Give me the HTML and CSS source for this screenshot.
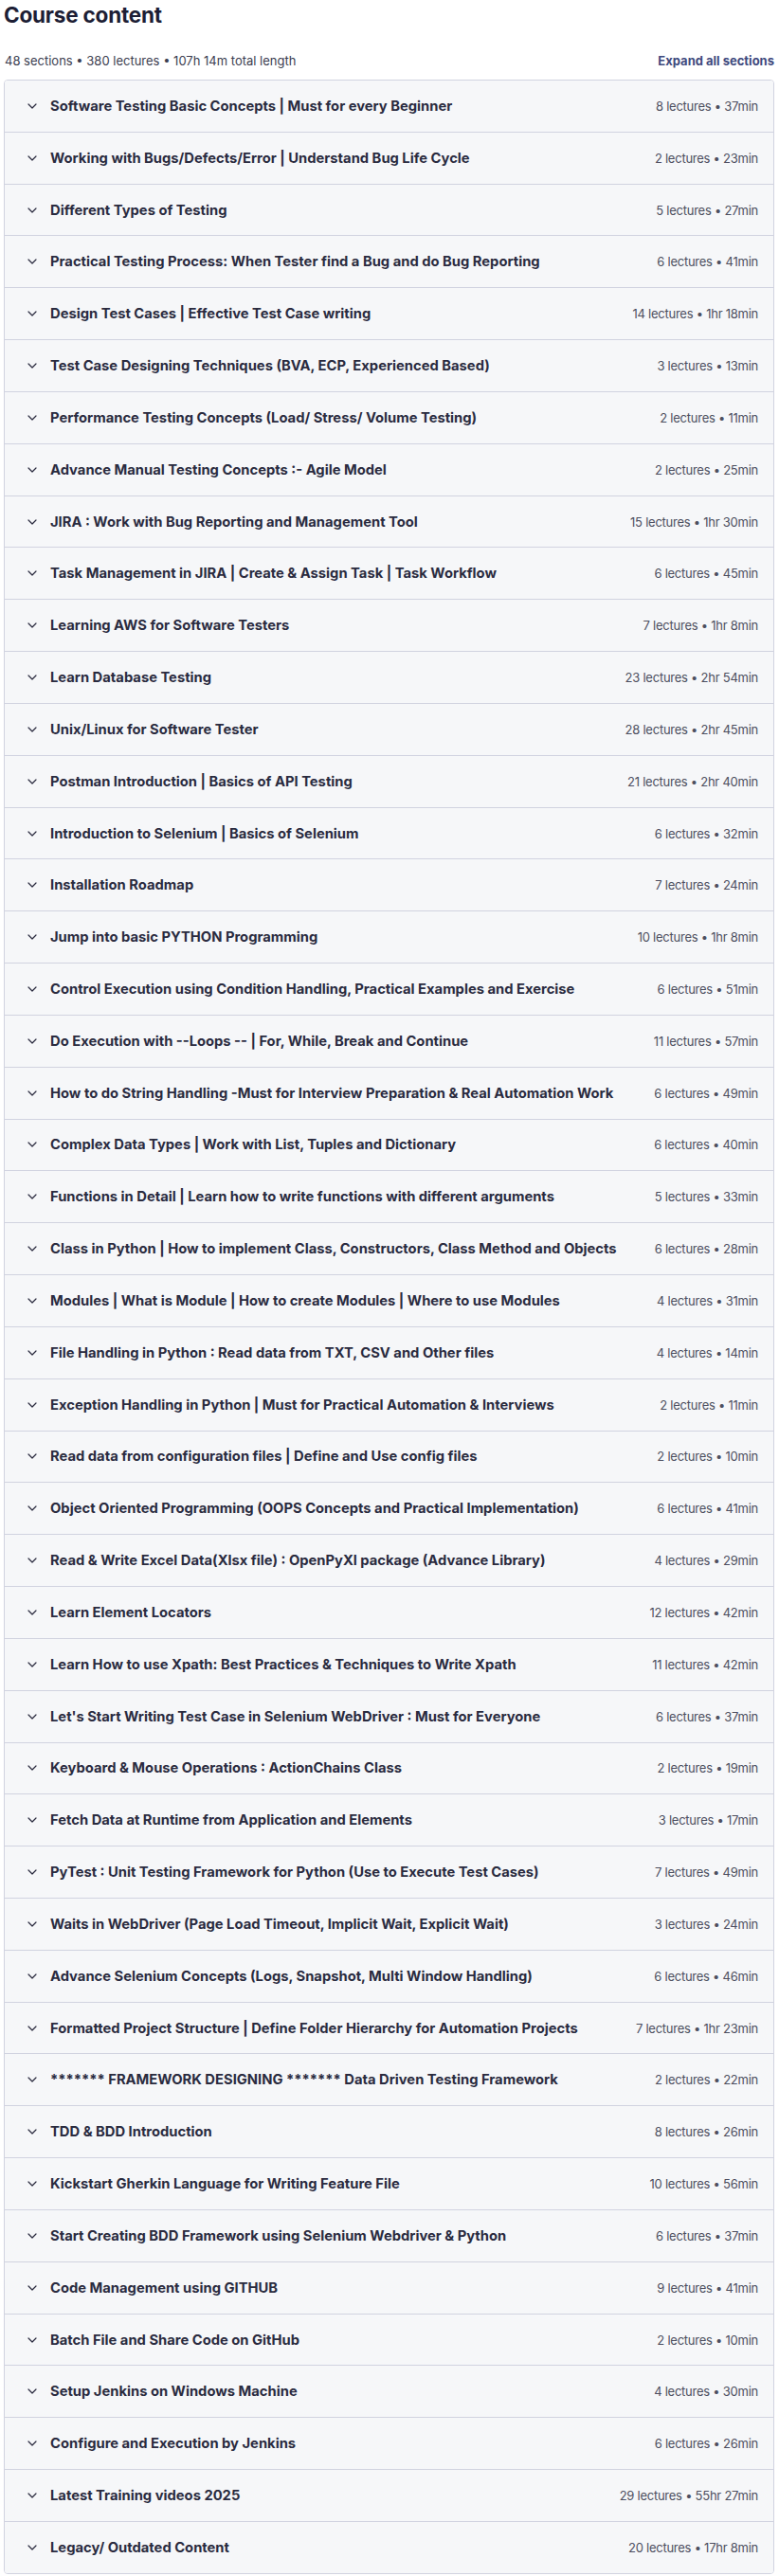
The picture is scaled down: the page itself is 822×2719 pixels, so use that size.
FILE: index.html
```html
<!DOCTYPE html>
<html lang="en">
<head>
<meta charset="utf-8">
<title>Course content</title>
<link rel="stylesheet" href="styles.css">
</head>
<body>
<main class="page">
  <h2 class="heading">Course content</h2>
  <div class="summary">
    <span class="summary-text">48 sections • 380 lectures • 107h 14m total length</span>
    <button class="expand">Expand all sections</button>
  </div>
  <div class="sections">
    <div class="section"><span class="chev"><svg viewBox="0 0 10 6" width="10" height="6"><polyline points="1,1 5,5 9,1"/></svg></span><span class="title">Software Testing Basic Concepts | Must for every Beginner</span><span class="meta">8 lectures • 37min</span></div>
    <div class="section"><span class="chev"><svg viewBox="0 0 10 6" width="10" height="6"><polyline points="1,1 5,5 9,1"/></svg></span><span class="title">Working with Bugs/Defects/Error | Understand Bug Life Cycle</span><span class="meta">2 lectures • 23min</span></div>
    <div class="section"><span class="chev"><svg viewBox="0 0 10 6" width="10" height="6"><polyline points="1,1 5,5 9,1"/></svg></span><span class="title">Different Types of Testing</span><span class="meta">5 lectures • 27min</span></div>
    <div class="section"><span class="chev"><svg viewBox="0 0 10 6" width="10" height="6"><polyline points="1,1 5,5 9,1"/></svg></span><span class="title">Practical Testing Process: When Tester find a Bug and do Bug Reporting</span><span class="meta">6 lectures • 41min</span></div>
    <div class="section"><span class="chev"><svg viewBox="0 0 10 6" width="10" height="6"><polyline points="1,1 5,5 9,1"/></svg></span><span class="title">Design Test Cases | Effective Test Case writing</span><span class="meta">14 lectures • 1hr 18min</span></div>
    <div class="section"><span class="chev"><svg viewBox="0 0 10 6" width="10" height="6"><polyline points="1,1 5,5 9,1"/></svg></span><span class="title">Test Case Designing Techniques (BVA, ECP, Experienced Based)</span><span class="meta">3 lectures • 13min</span></div>
    <div class="section"><span class="chev"><svg viewBox="0 0 10 6" width="10" height="6"><polyline points="1,1 5,5 9,1"/></svg></span><span class="title">Performance Testing Concepts (Load/ Stress/ Volume Testing)</span><span class="meta">2 lectures • 11min</span></div>
    <div class="section"><span class="chev"><svg viewBox="0 0 10 6" width="10" height="6"><polyline points="1,1 5,5 9,1"/></svg></span><span class="title">Advance Manual Testing Concepts :- Agile Model</span><span class="meta">2 lectures • 25min</span></div>
    <div class="section"><span class="chev"><svg viewBox="0 0 10 6" width="10" height="6"><polyline points="1,1 5,5 9,1"/></svg></span><span class="title">JIRA : Work with Bug Reporting and Management Tool</span><span class="meta">15 lectures • 1hr 30min</span></div>
    <div class="section"><span class="chev"><svg viewBox="0 0 10 6" width="10" height="6"><polyline points="1,1 5,5 9,1"/></svg></span><span class="title">Task Management in JIRA | Create &amp; Assign Task | Task Workflow</span><span class="meta">6 lectures • 45min</span></div>
    <div class="section"><span class="chev"><svg viewBox="0 0 10 6" width="10" height="6"><polyline points="1,1 5,5 9,1"/></svg></span><span class="title">Learning AWS for Software Testers</span><span class="meta">7 lectures • 1hr 8min</span></div>
    <div class="section"><span class="chev"><svg viewBox="0 0 10 6" width="10" height="6"><polyline points="1,1 5,5 9,1"/></svg></span><span class="title">Learn Database Testing</span><span class="meta">23 lectures • 2hr 54min</span></div>
    <div class="section"><span class="chev"><svg viewBox="0 0 10 6" width="10" height="6"><polyline points="1,1 5,5 9,1"/></svg></span><span class="title">Unix/Linux for Software Tester</span><span class="meta">28 lectures • 2hr 45min</span></div>
    <div class="section"><span class="chev"><svg viewBox="0 0 10 6" width="10" height="6"><polyline points="1,1 5,5 9,1"/></svg></span><span class="title">Postman Introduction | Basics of API Testing</span><span class="meta">21 lectures • 2hr 40min</span></div>
    <div class="section"><span class="chev"><svg viewBox="0 0 10 6" width="10" height="6"><polyline points="1,1 5,5 9,1"/></svg></span><span class="title">Introduction to Selenium | Basics of Selenium</span><span class="meta">6 lectures • 32min</span></div>
    <div class="section"><span class="chev"><svg viewBox="0 0 10 6" width="10" height="6"><polyline points="1,1 5,5 9,1"/></svg></span><span class="title">Installation Roadmap</span><span class="meta">7 lectures • 24min</span></div>
    <div class="section"><span class="chev"><svg viewBox="0 0 10 6" width="10" height="6"><polyline points="1,1 5,5 9,1"/></svg></span><span class="title">Jump into basic PYTHON Programming</span><span class="meta">10 lectures • 1hr 8min</span></div>
    <div class="section"><span class="chev"><svg viewBox="0 0 10 6" width="10" height="6"><polyline points="1,1 5,5 9,1"/></svg></span><span class="title">Control Execution using Condition Handling, Practical Examples and Exercise</span><span class="meta">6 lectures • 51min</span></div>
    <div class="section"><span class="chev"><svg viewBox="0 0 10 6" width="10" height="6"><polyline points="1,1 5,5 9,1"/></svg></span><span class="title">Do Execution with --Loops -- | For, While, Break and Continue</span><span class="meta">11 lectures • 57min</span></div>
    <div class="section"><span class="chev"><svg viewBox="0 0 10 6" width="10" height="6"><polyline points="1,1 5,5 9,1"/></svg></span><span class="title">How to do String Handling -Must for Interview Preparation &amp; Real Automation Work</span><span class="meta">6 lectures • 49min</span></div>
    <div class="section"><span class="chev"><svg viewBox="0 0 10 6" width="10" height="6"><polyline points="1,1 5,5 9,1"/></svg></span><span class="title">Complex Data Types | Work with List, Tuples and Dictionary</span><span class="meta">6 lectures • 40min</span></div>
    <div class="section"><span class="chev"><svg viewBox="0 0 10 6" width="10" height="6"><polyline points="1,1 5,5 9,1"/></svg></span><span class="title">Functions in Detail | Learn how to write functions with different arguments</span><span class="meta">5 lectures • 33min</span></div>
    <div class="section"><span class="chev"><svg viewBox="0 0 10 6" width="10" height="6"><polyline points="1,1 5,5 9,1"/></svg></span><span class="title">Class in Python | How to implement Class, Constructors, Class Method and Objects</span><span class="meta">6 lectures • 28min</span></div>
    <div class="section"><span class="chev"><svg viewBox="0 0 10 6" width="10" height="6"><polyline points="1,1 5,5 9,1"/></svg></span><span class="title">Modules | What is Module | How to create Modules | Where to use Modules</span><span class="meta">4 lectures • 31min</span></div>
    <div class="section"><span class="chev"><svg viewBox="0 0 10 6" width="10" height="6"><polyline points="1,1 5,5 9,1"/></svg></span><span class="title">File Handling in Python : Read data from TXT, CSV and Other files</span><span class="meta">4 lectures • 14min</span></div>
    <div class="section"><span class="chev"><svg viewBox="0 0 10 6" width="10" height="6"><polyline points="1,1 5,5 9,1"/></svg></span><span class="title">Exception Handling in Python | Must for Practical Automation &amp; Interviews</span><span class="meta">2 lectures • 11min</span></div>
    <div class="section"><span class="chev"><svg viewBox="0 0 10 6" width="10" height="6"><polyline points="1,1 5,5 9,1"/></svg></span><span class="title">Read data from configuration files | Define and Use config files</span><span class="meta">2 lectures • 10min</span></div>
    <div class="section"><span class="chev"><svg viewBox="0 0 10 6" width="10" height="6"><polyline points="1,1 5,5 9,1"/></svg></span><span class="title">Object Oriented Programming (OOPS Concepts and Practical Implementation)</span><span class="meta">6 lectures • 41min</span></div>
    <div class="section"><span class="chev"><svg viewBox="0 0 10 6" width="10" height="6"><polyline points="1,1 5,5 9,1"/></svg></span><span class="title">Read &amp; Write Excel Data(Xlsx file) : OpenPyXl package (Advance Library)</span><span class="meta">4 lectures • 29min</span></div>
    <div class="section"><span class="chev"><svg viewBox="0 0 10 6" width="10" height="6"><polyline points="1,1 5,5 9,1"/></svg></span><span class="title">Learn Element Locators</span><span class="meta">12 lectures • 42min</span></div>
    <div class="section"><span class="chev"><svg viewBox="0 0 10 6" width="10" height="6"><polyline points="1,1 5,5 9,1"/></svg></span><span class="title">Learn How to use Xpath: Best Practices &amp; Techniques to Write Xpath</span><span class="meta">11 lectures • 42min</span></div>
    <div class="section"><span class="chev"><svg viewBox="0 0 10 6" width="10" height="6"><polyline points="1,1 5,5 9,1"/></svg></span><span class="title">Let's Start Writing Test Case in Selenium WebDriver : Must for Everyone</span><span class="meta">6 lectures • 37min</span></div>
    <div class="section"><span class="chev"><svg viewBox="0 0 10 6" width="10" height="6"><polyline points="1,1 5,5 9,1"/></svg></span><span class="title">Keyboard &amp; Mouse Operations : ActionChains Class</span><span class="meta">2 lectures • 19min</span></div>
    <div class="section"><span class="chev"><svg viewBox="0 0 10 6" width="10" height="6"><polyline points="1,1 5,5 9,1"/></svg></span><span class="title">Fetch Data at Runtime from Application and Elements</span><span class="meta">3 lectures • 17min</span></div>
    <div class="section"><span class="chev"><svg viewBox="0 0 10 6" width="10" height="6"><polyline points="1,1 5,5 9,1"/></svg></span><span class="title">PyTest : Unit Testing Framework for Python (Use to Execute Test Cases)</span><span class="meta">7 lectures • 49min</span></div>
    <div class="section"><span class="chev"><svg viewBox="0 0 10 6" width="10" height="6"><polyline points="1,1 5,5 9,1"/></svg></span><span class="title">Waits in WebDriver (Page Load Timeout, Implicit Wait, Explicit Wait)</span><span class="meta">3 lectures • 24min</span></div>
    <div class="section"><span class="chev"><svg viewBox="0 0 10 6" width="10" height="6"><polyline points="1,1 5,5 9,1"/></svg></span><span class="title">Advance Selenium Concepts (Logs, Snapshot, Multi Window Handling)</span><span class="meta">6 lectures • 46min</span></div>
    <div class="section"><span class="chev"><svg viewBox="0 0 10 6" width="10" height="6"><polyline points="1,1 5,5 9,1"/></svg></span><span class="title">Formatted Project Structure | Define Folder Hierarchy for Automation Projects</span><span class="meta">7 lectures • 1hr 23min</span></div>
    <div class="section"><span class="chev"><svg viewBox="0 0 10 6" width="10" height="6"><polyline points="1,1 5,5 9,1"/></svg></span><span class="title">******* FRAMEWORK DESIGNING ******* Data Driven Testing Framework</span><span class="meta">2 lectures • 22min</span></div>
    <div class="section"><span class="chev"><svg viewBox="0 0 10 6" width="10" height="6"><polyline points="1,1 5,5 9,1"/></svg></span><span class="title">TDD &amp; BDD Introduction</span><span class="meta">8 lectures • 26min</span></div>
    <div class="section"><span class="chev"><svg viewBox="0 0 10 6" width="10" height="6"><polyline points="1,1 5,5 9,1"/></svg></span><span class="title">Kickstart Gherkin Language for Writing Feature File</span><span class="meta">10 lectures • 56min</span></div>
    <div class="section"><span class="chev"><svg viewBox="0 0 10 6" width="10" height="6"><polyline points="1,1 5,5 9,1"/></svg></span><span class="title">Start Creating BDD Framework using Selenium Webdriver &amp; Python</span><span class="meta">6 lectures • 37min</span></div>
    <div class="section"><span class="chev"><svg viewBox="0 0 10 6" width="10" height="6"><polyline points="1,1 5,5 9,1"/></svg></span><span class="title">Code Management using GITHUB</span><span class="meta">9 lectures • 41min</span></div>
    <div class="section"><span class="chev"><svg viewBox="0 0 10 6" width="10" height="6"><polyline points="1,1 5,5 9,1"/></svg></span><span class="title">Batch File and Share Code on GitHub</span><span class="meta">2 lectures • 10min</span></div>
    <div class="section"><span class="chev"><svg viewBox="0 0 10 6" width="10" height="6"><polyline points="1,1 5,5 9,1"/></svg></span><span class="title">Setup Jenkins on Windows Machine</span><span class="meta">4 lectures • 30min</span></div>
    <div class="section"><span class="chev"><svg viewBox="0 0 10 6" width="10" height="6"><polyline points="1,1 5,5 9,1"/></svg></span><span class="title">Configure and Execution by Jenkins</span><span class="meta">6 lectures • 26min</span></div>
    <div class="section"><span class="chev"><svg viewBox="0 0 10 6" width="10" height="6"><polyline points="1,1 5,5 9,1"/></svg></span><span class="title">Latest Training videos 2025</span><span class="meta">29 lectures • 55hr 27min</span></div>
    <div class="section"><span class="chev"><svg viewBox="0 0 10 6" width="10" height="6"><polyline points="1,1 5,5 9,1"/></svg></span><span class="title">Legacy/ Outdated Content</span><span class="meta">20 lectures • 17hr 8min</span></div>
  </div>
</main>
</body>
</html>
```

FILE: styles.css
```css
html, body {
  margin: 0;
  padding: 0;
  background: #ffffff;
}

body {
  font-family: Inter, "Noto Sans", "Liberation Sans", sans-serif;
  color: #2a2b3f;
}

.page {
  padding: 1px 5px 0 4px;
}

.heading {
  margin: 0;
  font-size: 22.5px;
  line-height: 29px;
  font-weight: 700;
  color: #1d1e35;
  letter-spacing: -0.2px;
}

.summary {
  display: flex;
  justify-content: space-between;
  align-items: center;
  margin-top: 24px;
  height: 20px;
  margin-bottom: 10px;
}

.summary-text {
  font-size: 13px;
  line-height: 20px;
  color: #3c3e50;
  padding-left: 1px;
}

.expand {
  border: 0;
  background: none;
  padding: 0;
  font-family: inherit;
  font-size: 13px;
  line-height: 20px;
  font-weight: 700;
  color: #3f4a7e;
}

.sections {
  border: 1px solid #d1d3e0;
  border-radius: 4px;
  overflow: hidden;
}

.section {
  display: flex;
  align-items: center;
  height: 53.83px;
  padding: 0 16px 0 24px;
  background: #f6f7f9;
  border-bottom: 1px solid #d1d3e0;
}

.section:last-child {
  border-bottom: 0;
}

.chev {
  display: flex;
  align-items: center;
  width: 10px;
  margin-right: 14px;
}

.chev svg {
  fill: none;
  stroke: #2a2b3f;
  stroke-width: 1.2;
  stroke-linecap: round;
  stroke-linejoin: round;
}

.title {
  flex: 1;
  font-size: 14.75px;
  font-weight: 700;
  color: #2a2b3f;
  white-space: nowrap;
}

.meta {
  font-size: 13px;
  letter-spacing: -0.25px;
  color: #4d4f60;
  white-space: nowrap;
}
```
